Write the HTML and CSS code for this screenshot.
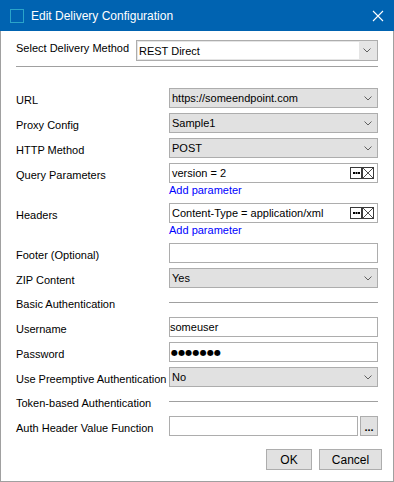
FILE: index.html
```html
<!DOCTYPE html>
<html lang="en">
<head>
    <meta charset="UTF-8">
    <meta name="viewport" content="width=device-width, initial-scale=1.0">
    <title>Edit Delivery Configuration</title>
    <link rel="stylesheet" href="styles.css">
</head>
<body>
    <div class="window">
        <div class="titlebar">
            <svg class="app-icon" width="15" height="14" viewBox="0 0 15 14">
                <rect x="0.5" y="0.5" width="13" height="13" fill="none" stroke="#2aa4c9" stroke-width="1"/>
            </svg>
            <span class="title">Edit Delivery Configuration</span>
            <svg class="close-icon" width="12" height="12" viewBox="0 0 12 12">
                <path d="M1 1 L11 11 M11 1 L1 11" stroke="#fff" stroke-width="1.1"/>
            </svg>
        </div>

        <div class="dialog">
            <div class="row top-row">
                <label class="top-label">Select Delivery Method</label>
                <div class="select editable">
                    <span class="edit-box">REST Direct</span>
                    <svg class="chevron" width="8" height="5" viewBox="0 0 8 5"><polyline points="0.5,0.5 4,4 7.5,0.5" fill="none" stroke="#606060"/></svg>
                </div>
            </div>
            <div class="separator"></div>

            <div class="form">
                <div class="row">
                    <label>URL</label>
                    <div class="select">
                        <span>https://someendpoint.com</span>
                        <svg class="chevron" width="8" height="5" viewBox="0 0 8 5"><polyline points="0.5,0.5 4,4 7.5,0.5" fill="none" stroke="#606060"/></svg>
                    </div>
                </div>
                <div class="row">
                    <label>Proxy Config</label>
                    <div class="select">
                        <span>Sample1</span>
                        <svg class="chevron" width="8" height="5" viewBox="0 0 8 5"><polyline points="0.5,0.5 4,4 7.5,0.5" fill="none" stroke="#606060"/></svg>
                    </div>
                </div>
                <div class="row">
                    <label>HTTP Method</label>
                    <div class="select">
                        <span>POST</span>
                        <svg class="chevron" width="8" height="5" viewBox="0 0 8 5"><polyline points="0.5,0.5 4,4 7.5,0.5" fill="none" stroke="#606060"/></svg>
                    </div>
                </div>

                <div class="group">
                    <div class="row">
                        <label>Query Parameters</label>
                        <div class="input list-item">
                            <span>version = 2</span>
                            <span class="mini-buttons">
                                <svg class="mini" width="12" height="12" viewBox="0 0 12 12"><rect x="0.5" y="0.5" width="11" height="11" fill="#fff" stroke="#3a3a3a"/><rect x="3" y="5" width="2" height="2"/><rect x="5.5" y="5" width="2" height="2"/><rect x="8" y="5" width="2" height="2"/></svg>
                                <svg class="mini" width="12" height="12" viewBox="0 0 12 12"><rect x="0.5" y="0.5" width="11" height="11" fill="#fff" stroke="#3a3a3a"/><path d="M1 1 L11 11 M11 1 L1 11" stroke="#222" stroke-width="0.8"/></svg>
                            </span>
                        </div>
                    </div>
                    <a class="link" href="#">Add parameter</a>
                </div>

                <div class="group">
                    <div class="row">
                        <label>Headers</label>
                        <div class="input list-item">
                            <span>Content-Type = application/xml</span>
                            <span class="mini-buttons">
                                <svg class="mini" width="12" height="12" viewBox="0 0 12 12"><rect x="0.5" y="0.5" width="11" height="11" fill="#fff" stroke="#3a3a3a"/><rect x="3" y="5" width="2" height="2"/><rect x="5.5" y="5" width="2" height="2"/><rect x="8" y="5" width="2" height="2"/></svg>
                                <svg class="mini" width="12" height="12" viewBox="0 0 12 12"><rect x="0.5" y="0.5" width="11" height="11" fill="#fff" stroke="#3a3a3a"/><path d="M1 1 L11 11 M11 1 L1 11" stroke="#222" stroke-width="0.8"/></svg>
                            </span>
                        </div>
                    </div>
                    <a class="link" href="#">Add parameter</a>
                </div>

                <div class="row">
                    <label>Footer (Optional)</label>
                    <div class="input"></div>
                </div>
                <div class="row">
                    <label>ZIP Content</label>
                    <div class="select">
                        <span>Yes</span>
                        <svg class="chevron" width="8" height="5" viewBox="0 0 8 5"><polyline points="0.5,0.5 4,4 7.5,0.5" fill="none" stroke="#606060"/></svg>
                    </div>
                </div>

                <div class="row section">
                    <label>Basic Authentication</label>
                    <div class="line"></div>
                </div>
                <div class="row">
                    <label>Username</label>
                    <div class="input plain">someuser</div>
                </div>
                <div class="row">
                    <label>Password</label>
                    <div class="input plain"><span class="dots">●●●●●●●</span></div>
                </div>
                <div class="row">
                    <label>Use Preemptive Authentication</label>
                    <div class="select">
                        <span>No</span>
                        <svg class="chevron" width="8" height="5" viewBox="0 0 8 5"><polyline points="0.5,0.5 4,4 7.5,0.5" fill="none" stroke="#606060"/></svg>
                    </div>
                </div>

                <div class="row section">
                    <label>Token-based Authentication</label>
                    <div class="line"></div>
                </div>
                <div class="row">
                    <label>Auth Header Value Function</label>
                    <div class="input"></div>
                    <button class="browse">...</button>
                </div>
            </div>

            <div class="actions">
                <button class="button ok">OK</button>
                <button class="button cancel">Cancel</button>
            </div>
        </div>
    </div>
</body>
</html>
```

FILE: styles.css
```css
body {
    margin: 0;
    font-family: "Liberation Sans", Arial, sans-serif;
    font-size: 11px;
    color: #000;
    background-color: #fff;
}
.window {
    width: 394px;
    height: 482px;
    display: flex;
    flex-direction: column;
}
.titlebar {
    flex: none;
    height: 31px;
    display: flex;
    align-items: center;
    padding: 0 10px;
    background-color: #0063b1;
    color: #fff;
}
.app-icon {
    margin-right: 6px;
}
.title {
    flex: 1;
    font-size: 12px;
}
.dialog {
    flex: 1;
    padding: 9px 15px 0 15px;
    border: 1px solid #a0a0a0;
    border-top: none;
}
.row {
    display: flex;
    align-items: center;
    height: 20px;
    margin-bottom: 5px;
}
.row label {
    flex: none;
    width: 153px;
    padding-top: 3px;
}
.top-row {
    height: 21px;
}
.row .top-label {
    width: 120px;
    padding-top: 0;
    align-self: flex-start;
    margin-top: 2px;
}
.separator {
    height: 1px;
    background-color: #a0a0a0;
    margin-bottom: 21px;
}
.select {
    flex: 1;
    height: 20px;
    box-sizing: border-box;
    display: flex;
    align-items: center;
    padding-left: 2px;
    border: 1px solid #adadad;
    background-color: #e1e1e1;
}
.select .chevron {
    margin-left: auto;
    margin-right: 5px;
}
.select.editable {
    height: 21px;
    padding: 1px;
    background-color: #e5e5e5;
}
.edit-box {
    flex: 1;
    height: 100%;
    display: flex;
    align-items: center;
    padding-left: 1px;
    margin-right: 4px;
    background-color: #fff;
}
.input {
    flex: 1;
    height: 20px;
    box-sizing: border-box;
    display: flex;
    align-items: center;
    padding-left: 2px;
    border: 1px solid #adadad;
    background-color: #fff;
}
.input.plain {
    padding-left: 0;
}
.mini-buttons {
    display: flex;
    margin-left: auto;
    margin-right: 3px;
}
.mini {
    display: block;
}
.dots {
    font-family: "DejaVu Sans", sans-serif;
    font-size: 8px;
    letter-spacing: 0.2px;
    padding-left: 1px;
}
.group {
    margin-bottom: 5px;
}
.group .row {
    margin-bottom: 0;
}
.link {
    display: block;
    height: 15px;
    line-height: 15px;
    margin-left: 153px;
    color: #0000ff;
    text-decoration: none;
}
.row.section {
    height: 19px;
}
.line {
    flex: 1;
    height: 1px;
    background-color: #a0a0a0;
}
.browse {
    flex: none;
    width: 18px;
    height: 20px;
    margin-left: 2px;
    padding: 0 0 2px;
    border: 1px solid #adadad;
    background-color: #e1e1e1;
    font-family: "Liberation Sans", Arial, sans-serif;
    font-size: 11px;
    font-weight: bold;
    line-height: 11px;
    display: flex;
    align-items: flex-end;
    justify-content: center;
}
.actions {
    display: flex;
    justify-content: flex-end;
    gap: 7px;
    margin-top: 13px;
    margin-right: -4px;
}
.button {
    height: 21px;
    padding: 0;
    border: 1px solid #adadad;
    background-color: #e1e1e1;
    font-family: "Liberation Sans", Arial, sans-serif;
    font-size: 12px;
    color: #000;
}
.ok {
    width: 46px;
}
.cancel {
    width: 63px;
}
```
